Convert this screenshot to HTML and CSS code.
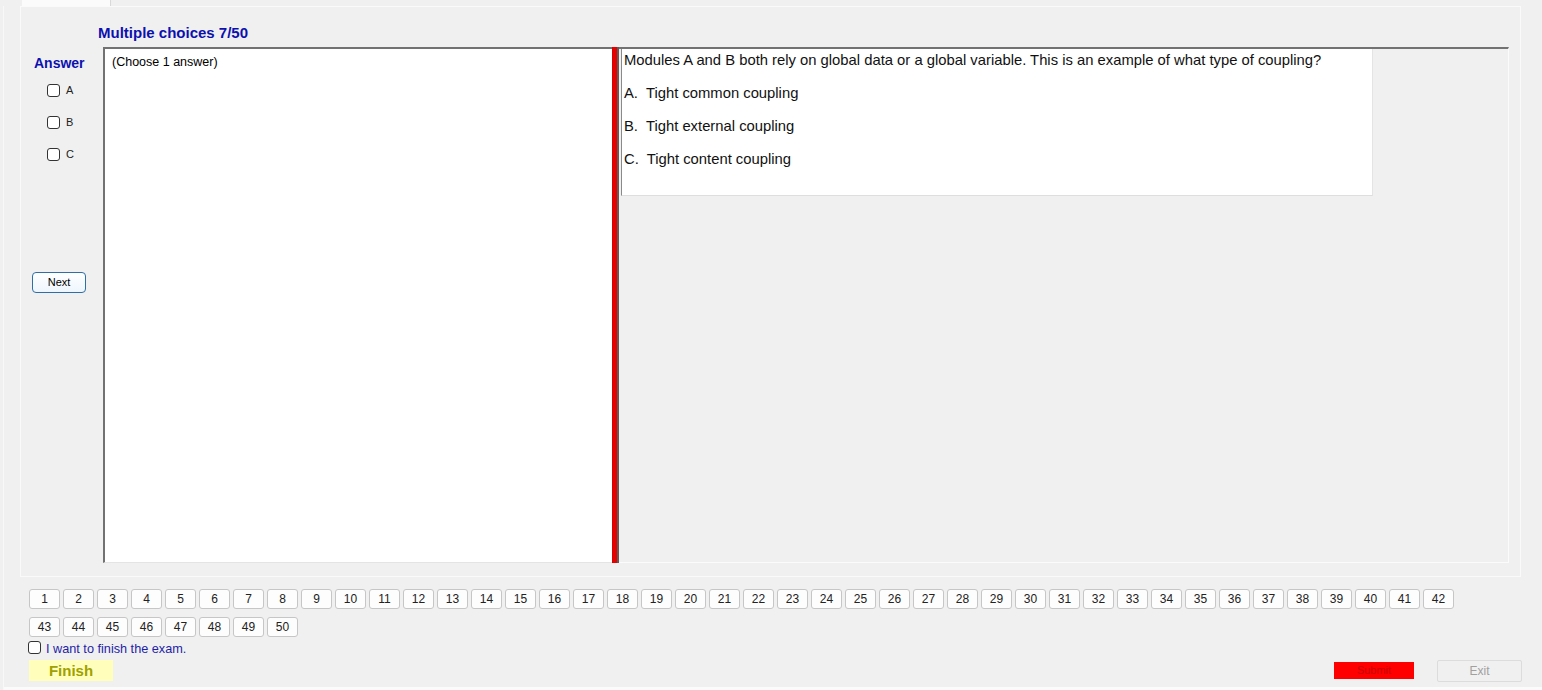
FILE: index.html
```html
<!DOCTYPE html>
<html>
<head>
<meta charset="utf-8">
<link rel="stylesheet" href="styles.css">
</head>
<body>
<div class="tabs"><div class="tab"></div></div>
<div class="page">
  <div class="panel">
    <div class="title">Multiple choices 7/50</div>
    <div class="main">
      <div class="answers">
        <div class="answer-head">Answer</div>
        <div class="opts">
          <div class="opt"><span class="cb"></span><span class="opt-label">A</span></div>
          <div class="opt"><span class="cb"></span><span class="opt-label">B</span></div>
          <div class="opt"><span class="cb"></span><span class="opt-label">C</span></div>
        </div>
        <div class="next">Next</div>
      </div>
      <div class="leftbox">(Choose 1 answer)</div>
      <div class="splitter"></div>
      <div class="rightpane">
        <div class="qbox">
          <div class="qtext">Modules A and B both rely on global data or a global variable. This is an example of what type of coupling?</div>
          <div class="qopt">A.  Tight common coupling</div>
          <div class="qopt">B.  Tight external coupling</div>
          <div class="qopt">C.  Tight content coupling</div>
        </div>
      </div>
    </div>
  </div>
  <div class="bottom">
    <div class="nums">
      <span class="num">1</span><span class="num">2</span><span class="num">3</span><span class="num">4</span><span class="num">5</span><span class="num">6</span><span class="num">7</span><span class="num">8</span><span class="num">9</span><span class="num">10</span>
      <span class="num">11</span><span class="num">12</span><span class="num">13</span><span class="num">14</span><span class="num">15</span><span class="num">16</span><span class="num">17</span><span class="num">18</span><span class="num">19</span><span class="num">20</span>
      <span class="num">21</span><span class="num">22</span><span class="num">23</span><span class="num">24</span><span class="num">25</span><span class="num">26</span><span class="num">27</span><span class="num">28</span><span class="num">29</span><span class="num">30</span>
      <span class="num">31</span><span class="num">32</span><span class="num">33</span><span class="num">34</span><span class="num">35</span><span class="num">36</span><span class="num">37</span><span class="num">38</span><span class="num">39</span><span class="num">40</span>
      <span class="num">41</span><span class="num">42</span><span class="num">43</span><span class="num">44</span><span class="num">45</span><span class="num">46</span><span class="num">47</span><span class="num">48</span><span class="num">49</span><span class="num">50</span>
    </div>
    <div class="finish-check"><span class="cb"></span><span class="finish-label">I want to finish the exam.</span></div>
    <div class="actions">
      <div class="finish">Finish</div>
      <div class="submit">Submit</div>
      <div class="exit">Exit</div>
    </div>
  </div>
  <div class="statusline"></div>
</div>
</body>
</html>
```
FILE: styles.css
```css
html, body {
  margin: 0;
  padding: 0;
}
body {
  background: #f0f0f0;
  font-family: "Liberation Sans", Arial, sans-serif;
  color: #000;
  width: 1542px;
  height: 690px;
  overflow: hidden;
}
.tabs {
  height: 6px;
  display: flex;
}
.tab {
  margin-left: 22px;
  width: 88px;
  height: 6px;
  background: #fbfbfb;
  border-right: 1px solid #d9d9d9;
}
.page {
  margin-left: 3px;
  border-left: 1px solid #f8f8f8;
  display: flex;
  flex-direction: column;
}
.panel {
  margin-left: 16px;
  width: 1501px;
  height: 571px;
  box-sizing: border-box;
  border: 1px solid #fafafa;
}
.title {
  padding: 17px 0 0 77px;
  line-height: 17px;
  height: 17px;
  font-size: 15px;
  font-weight: bold;
  color: #0d10b0;
}
.main {
  margin-top: 6px;
  display: flex;
  height: 516px;
}
.answers {
  width: 82px;
  display: flex;
  flex-direction: column;
}
.answer-head {
  padding: 8px 0 0 13px;
  line-height: 17px;
  font-size: 14px;
  font-weight: bold;
  color: #0d10b0;
}
.opts {
  margin-top: 2px;
}
.opt {
  height: 32px;
  display: flex;
  align-items: center;
  padding-left: 26px;
}
.cb {
  width: 11px;
  height: 11px;
  border: 1px solid #333;
  border-radius: 3px;
  background: #fff;
  display: inline-block;
  flex: none;
}
.opt-label {
  margin-left: 6px;
  font-size: 11px;
  color: #222;
  line-height: 13px;
}
.next {
  margin: 102px 0 0 11px;
  width: 54px;
  height: 21px;
  box-sizing: border-box;
  border: 1px solid #2f6fa5;
  border-radius: 4px;
  background: linear-gradient(#ffffff, #eef6fd);
  font-size: 11px;
  line-height: 19px;
  text-align: center;
}
.leftbox {
  width: 509px;
  height: 516px;
  box-sizing: border-box;
  background: #fff;
  border-top: 2px solid #727272;
  border-left: 2px solid #727272;
  border-bottom: 1px solid #e4e4e4;
  padding: 6px 0 0 7px;
  font-size: 12.5px;
  line-height: 14px;
}
.splitter {
  width: 7px;
  height: 516px;
  background: linear-gradient(to right, #c80000 0, #e60000 1px, #e60000 5px, #5c5c5c 5px, #5c5c5c 7px);
}
.rightpane {
  width: 890px;
  height: 516px;
  box-sizing: border-box;
  border-top: 2px solid #727272;
  border-right: 1px solid #fbfbfb;
  border-bottom: 1px solid #fbfbfb;
  background: #f0f0f0;
  padding-left: 2px;
}
.qbox {
  width: 752px;
  height: 147px;
  box-sizing: border-box;
  background: #fff;
  border-left: 1px solid #8a8a8a;
  border-right: 1px solid #e4e4e4;
  border-bottom: 1px solid #dedede;
  padding: 3px 0 0 2px;
  font-size: 14.8px;
  line-height: 16px;
  color: #111;
}
.qopt {
  margin-top: 17px;
  white-space: pre;
}
.bottom {
  padding-left: 25px;
  display: flex;
  flex-direction: column;
}
.nums {
  margin-top: 12px;
  display: grid;
  grid-template-columns: repeat(42, 31px);
  grid-auto-rows: 20px;
  column-gap: 3px;
  row-gap: 8px;
}
.num {
  box-sizing: border-box;
  border: 1px solid #c6c6c6;
  border-radius: 3px;
  background: #fdfdfd;
  font-size: 12px;
  line-height: 18px;
  text-align: center;
  color: #222;
}
.finish-check {
  margin: 4px 0 0 -1px;
  display: flex;
  align-items: center;
  height: 13px;
}
.finish-label {
  margin-left: 5px;
  font-size: 12.7px;
  color: #1e1ea8;
  line-height: 14px;
  padding-top: 2px;
}
.actions {
  margin-top: 6px;
  height: 21px;
  display: flex;
  align-items: center;
  padding-right: 20px;
}
.finish {
  width: 84px;
  height: 21px;
  background: #ffffbb;
  color: #a0a000;
  font-weight: bold;
  font-size: 15px;
  line-height: 21px;
  text-align: center;
}
.submit {
  margin-left: auto;
  width: 80px;
  height: 17px;
  background: #ff0000;
  color: #c80000;
  font-size: 11px;
  line-height: 17px;
  text-align: center;
}
.exit {
  margin-left: 23px;
  width: 85px;
  height: 22px;
  box-sizing: border-box;
  border: 1px solid #dcdcdc;
  border-radius: 2px;
  background: #f0f0f0;
  color: #a0a0a0;
  font-size: 12px;
  line-height: 20px;
  text-align: center;
}
.statusline {
  margin-top: 6px;
  height: 3px;
  background: #fbfbfb;
}
```
